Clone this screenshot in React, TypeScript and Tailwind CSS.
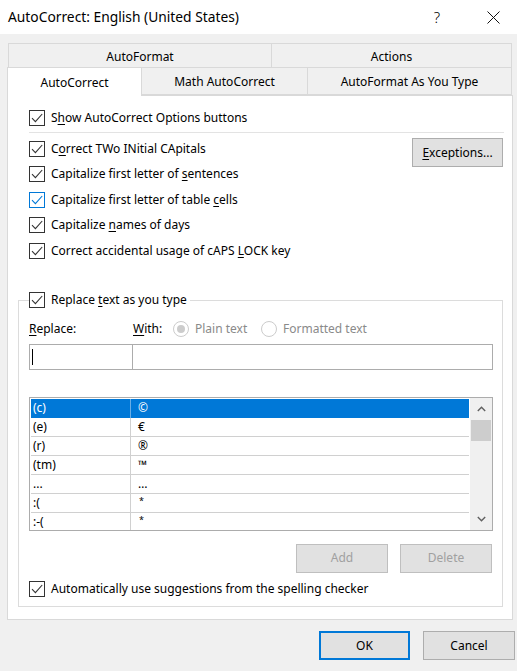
import type { ReactNode } from "react";

const rows: [string, string][] = [
  ["(c)", "©"],
  ["(e)", "€"],
  ["(r)", "®"],
  ["(tm)", "™"],
  ["...", "…"],
  [":(", "*"],
  [":-(", "*"],
];

function Key({ children }: { children: ReactNode }) {
  return <span className="underline decoration-1 underline-offset-2">{children}</span>;
}

function Box({ focus = false }: { focus?: boolean }) {
  const c = focus ? "#0078d7" : "#333333";
  return (
    <span
      className={`flex size-4 shrink-0 items-center justify-center border bg-white ${
        focus ? "border-[#0078d7]" : "border-[#333333]"
      }`}
    >
      <svg width="14" height="14" viewBox="0 0 14 14" fill="none">
        <path d="M2 7.2 5.4 10.6 12.2 3" stroke={c} strokeWidth="1.1" />
      </svg>
    </span>
  );
}

function CheckRow({ children, focus }: { children: ReactNode; focus?: boolean }) {
  return (
    <div className="flex h-[25.5px] items-center gap-[6px]">
      <Box focus={focus} />
      <span>{children}</span>
    </div>
  );
}

function Radio({ on = false }: { on?: boolean }) {
  return (
    <span className="flex size-4 shrink-0 items-center justify-center rounded-full border border-[#cccccc] bg-white">
      {on && <span className="size-2 rounded-full bg-[#cccccc]" />}
    </span>
  );
}

export default function App() {
  return (
    <div className="flex h-[671px] w-[517px] flex-col overflow-hidden bg-[#f0f0f0] font-['Noto_Sans',sans-serif] text-[12px] text-black">
      {/* title bar */}
      <div className="flex h-[34px] shrink-0 items-center bg-white pl-[8px]">
        <span className="text-[13.8px]">AutoCorrect: English (United States)</span>
        <span className="ml-auto mr-[47px] text-[15px] font-light">?</span>
        <svg className="mr-[17px]" width="13" height="13" viewBox="0 0 13 13">
          <path d="M0.5 0.5 12.5 12.5 M12.5 0.5 0.5 12.5" stroke="#111111" strokeWidth="1" />
        </svg>
      </div>

      {/* tabs */}
      <div className="ml-[7px] mt-[9px] w-[506px]">
        <div className="ml-px flex h-[25px]">
          <div className="flex w-[264px] items-center justify-center border border-[#d9d9d9] pt-[2px]">AutoFormat</div>
          <div className="flex w-[240px] items-center justify-center border border-l-0 border-[#d9d9d9] pt-[2px]">
            Actions
          </div>
        </div>
        <div className="flex h-[27px]">
          <div className="relative z-10 -mt-px flex h-[29px] w-[135px] items-center justify-center self-start border border-b-0 border-[#d9d9d9] bg-white pt-px">
            AutoCorrect
          </div>
          <div className="flex w-[166px] items-center justify-center border border-l-0 border-t-0 border-[#d9d9d9] pt-px">
            Math AutoCorrect
          </div>
          <div className="flex w-[204px] items-center justify-center border border-l-0 border-t-0 border-[#d9d9d9] pt-px">
            AutoFormat As You Type
          </div>
        </div>

        {/* panel */}
        <div className="h-[525px] border border-[#d9d9d9] bg-white pl-[10px] pr-[8px] pt-[9px]">
          <div className="pl-[11px]">
            <div className="flex h-[25px] items-center gap-[6px]">
              <Box />
              <span>
                S<Key>h</Key>ow AutoCorrect Options buttons
              </span>
            </div>
            <div className="mt-[2px] h-px bg-[#e3e3e3]" />
            <div className="flex justify-between">
              <div className="mt-[3px] flex flex-col">
                <CheckRow>
                  C<Key>o</Key>rrect TWo INitial CApitals
                </CheckRow>
                <CheckRow>
                  Capitalize first letter of <Key>s</Key>entences
                </CheckRow>
                <CheckRow focus>
                  Capitalize first letter of table <Key>c</Key>ells
                </CheckRow>
                <CheckRow>
                  Capitalize <Key>n</Key>ames of days
                </CheckRow>
                <CheckRow>
                  Correct accidental usage of cAPS <Key>L</Key>OCK key
                </CheckRow>
              </div>
              <button className="mr-px mt-[5px] flex h-[29px] w-[91px] items-center justify-center border border-[#adadad] bg-[#e1e1e1]">
                <Key>E</Key>xceptions...
              </button>
            </div>
          </div>

          {/* replace group */}
          <fieldset className="mr-px mt-[28px] border border-[#dcdcdc] pb-[4px] pl-[10px] pr-[9px]">
            <legend className="flex h-[17px] items-center gap-[6px] pr-[3px]">
              <Box />
              <span>
                Replace <Key>t</Key>ext as you type
              </span>
            </legend>

            <div className="mt-[10px] flex h-[20px] items-center">
              <span className="w-[104px]">
                <Key>R</Key>eplace:
              </span>
              <span className="w-[40px]">
                <Key>W</Key>ith:
              </span>
              <div className="flex w-[88px] items-center gap-[6px] text-[#8a8a8a]">
                <Radio on />
                <span>Plain text</span>
              </div>
              <div className="flex items-center gap-[6px] text-[#8a8a8a]">
                <Radio />
                <span>Formatted text</span>
              </div>
            </div>

            <div className="mt-[5px] flex h-[26px]">
              <div className="flex w-[104px] items-center border border-[#acacac] pl-[2px]">
                <span className="h-[16px] w-px bg-black" />
              </div>
              <div className="flex-1 border border-l-0 border-[#acacac]" />
            </div>

            <div className="mt-[27px] flex h-[134px] overflow-hidden border border-[#acacac]">
              <div className="flex-1 p-px">
                {rows.map(([from, to], i) => (
                  <div
                    key={i}
                    className={`flex h-[19px] items-center ${
                      i === 0 ? "bg-[#0078d7] text-white" : "border-b border-[#d0d0d0]"
                    }`}
                  >
                    <span
                      className={`flex h-full w-[100px] items-center border-r pl-[2px] ${
                        i === 0 ? "border-[#6aaee6]" : "border-[#d0d0d0]"
                      }`}
                    >
                      {from}
                    </span>
                    {to === "*" ? (
                      <span className="-mt-[3px] pl-[8px] text-[9px]">{to}</span>
                    ) : (
                      <span className="pl-[7px]">{to}</span>
                    )}
                  </div>
                ))}
              </div>
              <div className="flex w-[22px] flex-col bg-[#f0f0f0]">
                <div className="flex h-[22px] items-center justify-center">
                  <svg width="9" height="6" viewBox="0 0 9 6" fill="none">
                    <path d="M0.8 5 4.5 1.3 8.2 5" stroke="#606060" strokeWidth="1.4" />
                  </svg>
                </div>
                <div className="mx-px h-[21px] bg-[#cdcdcd]" />
                <div className="flex-1" />
                <div className="flex h-[22px] items-center justify-center">
                  <svg width="9" height="6" viewBox="0 0 9 6" fill="none">
                    <path d="M0.8 1 4.5 4.7 8.2 1" stroke="#606060" strokeWidth="1.4" />
                  </svg>
                </div>
              </div>
            </div>

            <div className="mt-[13px] flex justify-end gap-[12px] pr-px">
              <button className="flex h-[29px] w-[92px] items-center justify-center border border-[#bfbfbf] bg-[#e1e1e1] text-[#a0a0a0]">
                Add
              </button>
              <button className="flex h-[29px] w-[92px] items-center justify-center border border-[#bfbfbf] bg-[#e1e1e1] text-[#a0a0a0]">
                Delete
              </button>
            </div>

            <div className="mt-[4px] flex h-[25px] items-center gap-[6px]">
              <Box />
              <span>Automatically use suggestions from the spelling checker</span>
            </div>
          </fieldset>
        </div>
      </div>

      {/* footer */}
      <div className="mt-[11px] flex justify-end gap-[13px] pr-[2px]">
        <button className="flex h-[29px] w-[91px] items-center justify-center border-2 border-[#0078d7] bg-[#e1e1e1]">
          OK
        </button>
        <button className="flex h-[29px] w-[92px] items-center justify-center border border-[#adadad] bg-[#e1e1e1]">
          Cancel
        </button>
      </div>
    </div>
  );
}
